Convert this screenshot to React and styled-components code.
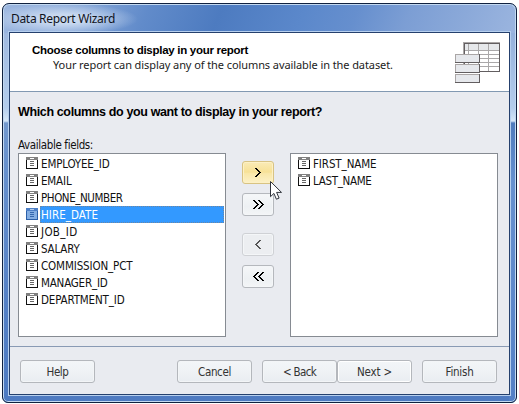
import React, { useLayoutEffect, useRef, useState } from "react";
import styled, { createGlobalStyle } from "styled-components";

const GlobalStyle = createGlobalStyle`
  * { box-sizing: border-box; }
  body { margin: 0; background: #fff; overflow: hidden; }
`;

const Page = styled.div`
  position: relative;
  width: 519px;
  height: 404px;
  padding: 3px 1px 1px 2px;
  background: #fff;
  font-family: "Noto Sans", "Open Sans", sans-serif;
  font-size: 11px;
  color: #111;
`;

const WindowFrame = styled.div`
  display: flex;
  flex-direction: column;
  width: 515px;
  height: 400px;
  padding: 0 6px 7px;
  border: 1px solid #10213f;
  border-radius: 7px 7px 6px 6px;
  box-shadow: inset 0 0 0 1px #c3d9f1;
  background:
    linear-gradient(180deg, #a0b9df 0, #b4cdec 75px, #d5e6f7 88px, #7398cc 90px, #6891cd 131px, #5480c5 271px, #4d7ac1 371px)
      0 29px / 7px 371px no-repeat,
    linear-gradient(180deg, #94b1dc 0, #b4cdec 75px, #d5e6f7 88px, #4f7bbd 90px, #6791cf 150px, #5480c5 371px)
      100% 29px / 7px 371px no-repeat,
    radial-gradient(ellipse 75px 16px at 60px 15px, rgba(203, 219, 241, 0.95) 30%, rgba(180, 202, 234, 0) 100%) 0 0 / 100% 30px no-repeat,
    linear-gradient(112deg, #9db7df 0, #85a6d8 15%, #618bca 28%, #4d7bc0 42%, #5b88cb 58%, #668fce 68%, #7c9ed4 78%, #8ba9d9 89%, #9bb5df 100%)
      0 0 / 100% 30px no-repeat,
    #4f7bc1;
`;

const TitleBar = styled.div`
  display: flex;
  align-items: center;
  flex: none;
  height: 28px;
  padding: 0 0 0 2px;
  font-size: 12px;
  color: #10131c;
`;

const Client = styled.div`
  display: flex;
  flex-direction: column;
  flex: 1;
  width: 501px;
  border: 1px solid #25406d;
  box-shadow: 0 0 0 1px #b6cfee;
  background: #e9ebf0;
`;

const Header = styled.header`
  display: flex;
  justify-content: space-between;
  flex: none;
  height: 59px;
  padding: 9px 8px 0 22px;
  border-bottom: 1px solid #8299b2;
  background: #fff;
`;

const HeaderText = styled.div`
  display: flex;
  flex-direction: column;
`;

const Heading = styled.h1`
  height: 15px;
  margin: 0;
  font: bold 11.5px/16px "Liberation Sans", Arial, sans-serif;
  color: #000;
`;

const Subheading = styled.p`
  margin: 0 0 0 21px;
  font-size: 11px;
  line-height: 16px;
  color: #222;
`;

const Body = styled.main`
  display: flex;
  flex-direction: column;
  flex: none;
  height: 255px;
  padding: 12px 10px 0 8px;
  border-bottom: 1px solid #899ab4;
`;

const Question = styled.h2`
  height: 31px;
  margin: 0;
  font: bold 12.5px/17px "Liberation Sans", Arial, sans-serif;
  color: #000;
`;

const FieldsLabel = styled.div`
  height: 18px;
  font-family: "DejaVu Sans Condensed", "Noto Sans", sans-serif;
  font-size: 11.5px;
  line-height: 20px;
`;

const Picker = styled.div`
  display: grid;
  grid-template-columns: 208px 64px 208px;
  height: 184px;
`;

const ListBox = styled.ul`
  margin: 0;
  padding: 1px;
  border: 1px solid #868b92;
  background: #fff;
  font-family: "DejaVu Sans Condensed", "Noto Sans", sans-serif;
  font-size: 11.5px;
  list-style: none;
`;

const ListItem = styled.li`
  display: flex;
  align-items: center;
  height: 17px;
  padding-left: ${(p) => p.$inset}px;
`;

const ItemLabel = styled.span`
  flex: 1;
  height: 17px;
  margin-left: 2px;
  padding-left: 1px;
  line-height: 19px;
  color: ${(p) => (p.$selected ? "#fff" : "#111")};
  background: ${(p) => (p.$selected ? "#3399ff" : "transparent")};
  outline: ${(p) => (p.$selected ? "1px dotted #6f86a0" : "none")};
  outline-offset: -1px;
`;

const Movers = styled.div`
  display: flex;
  flex-direction: column;
  align-items: flex-start;
  gap: 9px;
  padding: 8px 0 0 16px;
`;

const MoveButton = styled.button`
  display: grid;
  place-items: center;
  width: 32px;
  height: 23px;
  padding: 0;
  margin-top: ${(p) => (p.$spaced ? 8 : 0)}px;
  border: 1px solid ${(p) => (p.$hot ? "#d8c383" : p.disabled ? "#cfd1d5" : "#b5b8bd")};
  border-radius: 3px;
  background: ${(p) =>
    p.$hot
      ? "linear-gradient(#faebb6, #f7e196 48%, #f9e7a9 55%, #fcf1c7)"
      : p.disabled
        ? "#eceef1"
        : "linear-gradient(#f5f7f9, #edf0f3 60%, #f3f5f7)"};
  box-shadow: inset 0 0 0 1px ${(p) => (p.$hot ? "#fdf1c6" : "#f4f6f8")};
`;

const Footer = styled.footer`
  display: flex;
  padding: 13px 10px 0 10px;
`;

const PushButton = styled.button`
  width: 75px;
  height: 23px;
  padding: 1px 0 0;
  margin-left: ${(p) => p.$gap || 0}px;
  border: 1px solid #b4b7bc;
  border-radius: 3px;
  background: linear-gradient(#f3f6f8, #eff2f5 50%, #e9edf1);
  box-shadow: inset 0 0 0 1px ${(p) => (p.$primary ? "#fff" : "#f3f5f7")};
  font: 11.5px/20px "DejaVu Sans Condensed", "Noto Sans", sans-serif;
  color: #333;
`;

const Pointer = styled.svg`
  position: absolute;
  left: 270px;
  top: 181px;
`;

const TextRun = styled.span`
  display: inline-block;
  white-space: pre;
`;

/* Tracks the text so that it fills the given width. */
function Fitted({ width, children }) {
  const ref = useRef(null);
  const [spacing, setSpacing] = useState(0);
  useLayoutEffect(() => {
    const natural = ref.current.getBoundingClientRect().width;
    setSpacing((width - natural) / children.length);
  }, [width, children]);
  return (
    <TextRun ref={ref} style={{ letterSpacing: spacing }}>
      {children}
    </TextRun>
  );
}

function FieldIcon({ selected }) {
  const dark = selected ? "#2b5fa8" : "#111";
  const top = selected ? "#4d7fc6" : "#808080";
  const fill = selected ? "#84aee3" : "#fff";
  return (
    <svg width="12" height="13" shapeRendering="crispEdges">
      <path d="M0 3h12v9H0z" fill={dark} />
      <path d="M1 3h10v8H1z" fill={fill} />
      <path d="M0 0h12v3H0z" fill={top} />
      <path d="M4 1h4v1H4z" fill={selected ? "#b4cdec" : "#fff"} />
      <path d="M4 4h4v1H4zM4 6h4v1H4zM4 8h4v1H4z" fill={selected ? "#3568ae" : "#666"} />
    </svg>
  );
}

function TableIcon() {
  return (
    <svg width="46" height="42" shapeRendering="crispEdges">
      <path d="M8 0h37v30H8z" fill="#aaa6a6" />
      <path d="M9 1h36v29H9z" fill="#625e60" />
      <path d="M10 2h34v27H10z" fill="#fff" />
      <path d="M10 2h34v6H10z" fill="#e6e8eb" />
      <path d="M10 8h34v1H10zM10 12h34v1H10zM10 16h34v1H10zM10 20h34v1H10zM10 24h34v1H10zM13 2h1v27h-1zM23 2h1v27h-1zM33 2h1v27h-1z" fill="#aaa8a9" />
      {[12, 22, 32].map((y) => (
        <g key={y}>
          <rect x="0" y={y} width="25" height="9" fill="#625e60" />
          <rect x="0" y={y} width="24" height="8" fill="#aaa6a6" />
          <rect x="1" y={y + 1} width="23" height="7" fill="#e6e8ec" />
        </g>
      ))}
    </svg>
  );
}

function Chevron({ twice, left, color = "#000" }) {
  const arrow = "h2v1h1v1h1v1h1v1h1v1h-1v1h-1v1h-1v1h-1v1h-2v-1h1v-1h1v-1h1v-1h1v-1h-1v-1h-1v-1h-1v-1h-1z";
  const w = twice ? 11 : 6;
  return (
    <svg width={w} height="9" shapeRendering="crispEdges">
      <g transform={left ? `translate(${w} 0) scale(-1 1)` : undefined} fill={color}>
        <path d={`M0 0${arrow}`} />
        {twice && <path d={`M5 0${arrow}`} />}
      </g>
    </svg>
  );
}

const available = [
  ["EMPLOYEE_ID", 68.5],
  ["EMAIL", 30.5],
  ["PHONE_NUMBER", 81.5],
  ["HIRE_DATE", 57],
  ["JOB_ID", 36.5],
  ["SALARY", 38.5],
  ["COMMISSION_PCT", 91.5],
  ["MANAGER_ID", 66.5],
  ["DEPARTMENT_ID", 83.5],
];
const chosen = [
  ["FIRST_NAME", 63.5],
  ["LAST_NAME", 58.5],
];

function FieldList({ fields, selected, inset }) {
  return (
    <ListBox>
      {fields.map(([name, width]) => (
        <ListItem key={name} $inset={inset}>
          <FieldIcon selected={name === selected} />
          <ItemLabel $selected={name === selected}>
            <Fitted width={width}>{name}</Fitted>
          </ItemLabel>
        </ListItem>
      ))}
    </ListBox>
  );
}

export default function App() {
  return (
    <Page>
      <GlobalStyle />
      <WindowFrame>
        <TitleBar>
          <Fitted width={104}>Data Report Wizard</Fitted>
        </TitleBar>
        <Client>
          <Header>
            <HeaderText>
              <Heading>
                <Fitted width={216}>Choose columns to display in your report</Fitted>
              </Heading>
              <Subheading>
                <Fitted width={340}>Your report can display any of the columns available in the dataset.</Fitted>
              </Subheading>
            </HeaderText>
            <TableIcon />
          </Header>
          <Body>
            <Question>
              <Fitted width={304}>Which columns do you want to display in your report?</Fitted>
            </Question>
            <FieldsLabel>
              <Fitted width={75}>Available fields:</Fitted>
            </FieldsLabel>
            <Picker>
              <FieldList fields={available} selected="HIRE_DATE" inset={6} />
              <Movers>
                <MoveButton $hot><Chevron /></MoveButton>
                <MoveButton><Chevron twice /></MoveButton>
                <MoveButton $spaced disabled><Chevron left color="#555" /></MoveButton>
                <MoveButton><Chevron twice left /></MoveButton>
              </Movers>
              <FieldList fields={chosen} inset={6} />
            </Picker>
          </Body>
          <Footer>
            <PushButton><Fitted width={22}>Help</Fitted></PushButton>
            <PushButton $gap={82}><Fitted width={33}>Cancel</Fitted></PushButton>
            <PushButton $gap={10}><Fitted width={33}>{"< Back"}</Fitted></PushButton>
            <PushButton $primary><Fitted width={35}>{"Next >"}</Fitted></PushButton>
            <PushButton $gap={10}><Fitted width={28}>Finish</Fitted></PushButton>
          </Footer>
        </Client>
      </WindowFrame>
      <Pointer width="13" height="20" viewBox="0 0 13 20">
        <path d="M.5.5v15.2l3.4-3.3 2.5 5.8 2.7-1.1-2.5-5.7h4.9z" fill="#fff" stroke="#30343c" />
      </Pointer>
    </Page>
  );
}
